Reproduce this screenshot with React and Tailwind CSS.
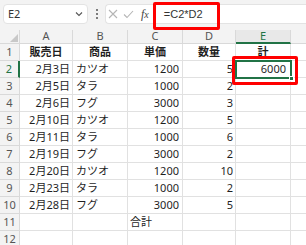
import React from "react";

const rows = [
  ["販売日", "商品", "単価", "数量", "計"],
  ["2月3日", "カツオ", "1200", "5", "6000"],
  ["2月5日", "タラ", "1000", "2", ""],
  ["2月6日", "フグ", "3000", "3", ""],
  ["2月10日", "カツオ", "1200", "5", ""],
  ["2月11日", "タラ", "1000", "6", ""],
  ["2月19日", "フグ", "3000", "2", ""],
  ["2月20日", "カツオ", "1200", "10", ""],
  ["2月23日", "タラ", "1000", "2", ""],
  ["2月28日", "フグ", "3000", "5", ""],
  ["", "", "合計", "", ""],
  ["", "", "", "", ""],
];

const cols = ["A", "B", "C", "D", "E"];

function Cell({ children, className = "" }) {
  return (
    <div className={`h-[17px] border-r border-b border-[#e1e1e1] flex items-center overflow-hidden whitespace-nowrap text-[11px] text-[#1f1f1f] ${className}`}>
      {children}
    </div>
  );
}

export default function App() {
  return (
    <div
      className="relative w-[306px] h-[245px] overflow-hidden bg-white"
      style={{ fontFamily: '"Noto Sans", "Noto Sans CJK JP", sans-serif' }}
    >
      {/* formula bar */}
      <div className="h-[30px] bg-[#f3f3f3] flex items-start pt-[4px] pl-[3px]">
        <div className="w-[85px] h-[20px] bg-white rounded-[4px] border border-[#e3e3e3] flex items-center justify-between pl-[4px] pr-[4px]">
          <span className="text-[11px] text-[#333]">E2</span>
          <svg width="8" height="6" viewBox="0 0 8 6">
            <path d="M1 1.5 L4 4.5 L7 1.5" fill="none" stroke="#555" strokeWidth="1.1" />
          </svg>
        </div>
        <div className="w-[17px] h-[20px] flex flex-col items-center justify-center gap-[2px]">
          <div className="w-[2px] h-[2px] bg-[#555] rounded-full" />
          <div className="w-[2px] h-[2px] bg-[#555] rounded-full" />
          <div className="w-[2px] h-[2px] bg-[#555] rounded-full" />
        </div>
        <div className="flex-1 h-[20px] bg-white rounded-l-[4px] border border-r-0 border-[#e3e3e3] flex items-center">
          <div className="w-[2px]" />
          <svg width="10" height="10" viewBox="0 0 10 10">
            <path d="M1 1 L9 9 M9 1 L1 9" stroke="#b5b5b5" strokeWidth="1.1" fill="none" />
          </svg>
          <div className="w-[5px]" />
          <svg width="11" height="9" viewBox="0 0 11 9">
            <path d="M1 4.5 L4 7.5 L10 1" stroke="#b5b5b5" strokeWidth="1.1" fill="none" />
          </svg>
          <div className="w-[7px]" />
          <span className="text-[12px] italic text-[#444]" style={{ fontFamily: '"Liberation Serif", serif' }}>
            f<span className="text-[10px]">x</span>
          </span>
          <span className="ml-[15px] text-[11px] text-[#333]" style={{ fontFamily: '"Liberation Sans", sans-serif' }}>
            =C2*D2
          </span>
        </div>
      </div>

      {/* grid */}
      <div className="grid grid-cols-[20px_53px_55px_55px_53px_55px_1fr]">
        {/* header row */}
        <div className="h-[14px] bg-[#f3f3f3] border-r border-b border-[#d9d9d9] relative">
          <svg className="absolute right-[1px] bottom-[1px]" width="8" height="8" viewBox="0 0 8 8">
            <path d="M8 0 L8 8 L0 8 Z" fill="#c8c8c8" />
          </svg>
        </div>
        {cols.map((c) =>
          c === "E" ? (
            <div key={c} className="h-[14px] bg-[#e8e8e8] border-r border-[#d9d9d9] border-b-2 border-b-[#217346] flex items-center justify-center text-[11px] text-[#217346]">
              {c}
            </div>
          ) : (
            <div key={c} className="h-[14px] bg-[#f3f3f3] border-r border-b border-[#d9d9d9] flex items-center justify-center text-[11px] text-[#555]">
              {c}
            </div>
          )
        )}
        <div className="h-[14px] bg-[#f3f3f3] border-b border-[#d9d9d9]" />

        {rows.map((r, i) => {
          const n = i + 1;
          const header = n === 1;
          return (
            <React.Fragment key={n}>
              <div
                className={`h-[17px] bg-[#f3f3f3] border-b border-[#d9d9d9] flex items-center justify-center text-[11px] ${
                  n === 2 ? "text-[#217346] border-r-2 border-r-[#217346]" : "text-[#555] border-r"
                }`}
              >
                {n}
              </div>
              <Cell className={header ? "justify-center font-bold" : "justify-end pr-[2px]"}>{r[0]}</Cell>
              <Cell className={header ? "justify-center font-bold" : "justify-start pl-[3px]"}>{r[1]}</Cell>
              <Cell className={header ? "justify-center font-bold" : n === 11 ? "justify-start pl-[2px]" : "justify-end pr-[3px]"}>{r[2]}</Cell>
              <Cell className={header ? "justify-center font-bold" : "justify-end pr-[2px]"}>{r[3]}</Cell>
              <Cell className={header ? "justify-center font-bold" : "justify-end pr-[4px]"}>{r[4]}</Cell>
              <Cell className="border-r-0" />
            </React.Fragment>
          );
        })}
      </div>

      {/* selection on E2 */}
      <div className="absolute left-[235px] top-[60px] w-[57px] h-[19px] border-2 border-[#217346]">
        <div className="absolute right-[-4px] bottom-[-4px] w-[5px] h-[5px] bg-[#217346] border border-white" />
      </div>

      {/* red highlight boxes */}
      <div className="absolute left-[153px] top-[2px] w-[67px] h-[28px] border-[3px] border-[#ff0000] rounded-[2px]" />
      <div className="absolute left-[232px] top-[56px] w-[66px] h-[29px] border-[3px] border-[#ff0000] rounded-[2px]" />
    </div>
  );
}
